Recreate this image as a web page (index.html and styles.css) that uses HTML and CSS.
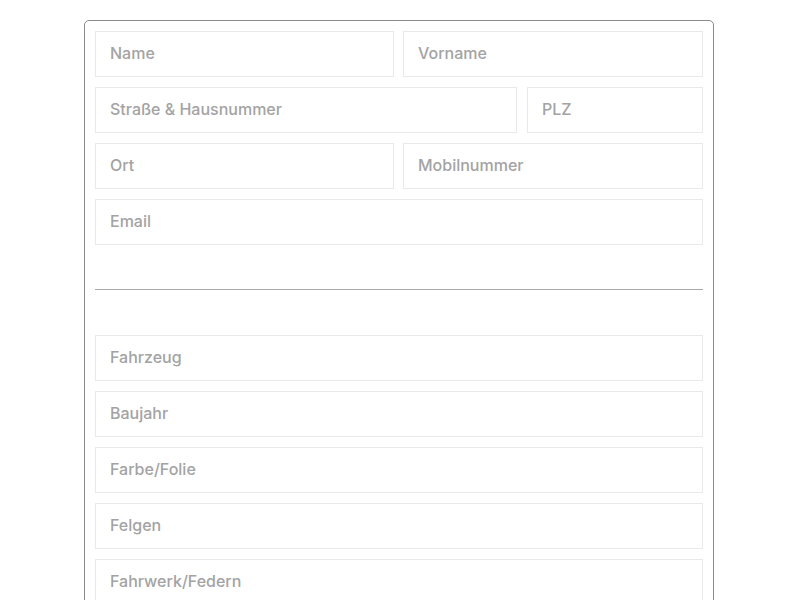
FILE: index.html
```html
<!DOCTYPE html>
<html lang="de">
<head>
<meta charset="utf-8">
<title>Formular</title>
<link rel="stylesheet" href="styles.css">
</head>
<body>
<form class="card">
  <div class="row half">
    <input class="field" type="text" placeholder="Name">
    <input class="field" type="text" placeholder="Vorname">
  </div>
  <div class="row street">
    <input class="field" type="text" placeholder="Straße &amp; Hausnummer">
    <input class="field" type="text" placeholder="PLZ">
  </div>
  <div class="row half">
    <input class="field" type="text" placeholder="Ort">
    <input class="field" type="text" placeholder="Mobilnummer">
  </div>
  <div class="row">
    <input class="field" type="email" placeholder="Email">
  </div>
  <hr class="divider">
  <div class="row">
    <input class="field" type="text" placeholder="Fahrzeug">
  </div>
  <div class="row">
    <input class="field" type="text" placeholder="Baujahr">
  </div>
  <div class="row">
    <input class="field" type="text" placeholder="Farbe/Folie">
  </div>
  <div class="row">
    <input class="field" type="text" placeholder="Felgen">
  </div>
  <div class="row">
    <input class="field" type="text" placeholder="Fahrwerk/Federn">
  </div>
</form>
</body>
</html>
```

FILE: styles.css
```css
* {
  box-sizing: border-box;
}

html, body {
  margin: 0;
  padding: 0;
  background: #ffffff;
}

body {
  font-family: Inter, "Noto Sans", "Liberation Sans", sans-serif;
  padding-top: 20px;
}

.card {
  width: 630px;
  margin: 0 0 0 84px;
  border: 1px solid #8a8a8a;
  border-radius: 5px;
  padding: 10px;
  display: flex;
  flex-direction: column;
  gap: 10px;
}

.row {
  display: grid;
  grid-template-columns: 1fr;
  gap: 10px;
}

.row.half {
  grid-template-columns: 299px 1fr;
  gap: 9px;
}

.row.street {
  grid-template-columns: 422px 1fr;
}

.field {
  display: block;
  width: 100%;
  height: 46px;
  border: 1px solid #e9e9e9;
  border-radius: 0;
  padding: 0 14px 2px;
  font-family: inherit;
  font-size: 16px;
  font-weight: 500;
  color: #555;
  background: #fff;
  outline: none;
}

.field::placeholder {
  color: #a3a3a3;
  opacity: 1;
}

.divider {
  border: 0;
  border-top: 1px solid #a9a9a9;
  height: 0;
  margin: 34px 0 35px;
}
```
